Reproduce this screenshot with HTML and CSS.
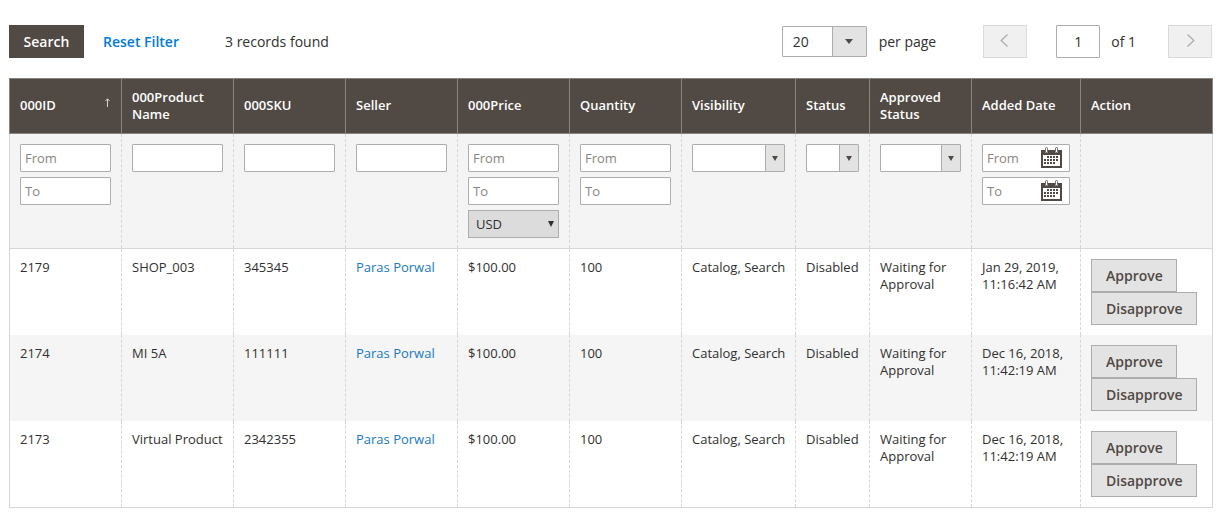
FILE: index.html
```html
<!DOCTYPE html>
<html lang="en">
<head>
    <meta charset="UTF-8">
    <title>Products</title>
    <link rel="stylesheet" href="styles.css">
</head>
<body>
<div class="toolbar">
    <button class="btn-search">Search</button>
    <a href="#" class="reset">Reset Filter</a>
    <span class="found">3 records found</span>
    <div class="pagesize">
        <span class="pagesize-val">20</span>
        <span class="pagesize-arrow"><i class="tri"></i></span>
    </div>
    <span class="perpage">per page</span>
    <button class="pager prev"><svg width="8" height="13" viewBox="0 0 8 13"><path d="M7.5 0.5 L1.2 6.5 L7.5 12.5" fill="none" stroke="#adadad" stroke-width="1.3"/></svg></button>
    <input class="pagenum" type="text" value="1">
    <span class="of">of 1</span>
    <button class="pager next"><svg width="8" height="13" viewBox="0 0 8 13"><path d="M0.5 0.5 L6.8 6.5 L0.5 12.5" fill="none" stroke="#adadad" stroke-width="1.3"/></svg></button>
</div>
<table class="grid">
    <colgroup>
        <col class="w112"><col class="w112"><col class="w112"><col class="w112"><col class="w112"><col class="w112">
        <col class="w114"><col class="w74"><col class="w102"><col class="w109"><col class="w132">
    </colgroup>
    <thead>
    <tr>
        <th>000ID<svg class="sort" width="5" height="9" viewBox="0 0 5 9"><path d="M2.5 9V1M0.5 3L2.5 0.8L4.5 3" fill="none" stroke="#d8d3cf" stroke-width="1"/></svg></th>
        <th class="two">000Product Name</th>
        <th>000SKU</th>
        <th>Seller</th>
        <th>000Price</th>
        <th>Quantity</th>
        <th>Visibility</th>
        <th>Status</th>
        <th class="two">Approved Status</th>
        <th>Added Date</th>
        <th>Action</th>
    </tr>
    <tr class="filters">
        <td>
            <input type="text" placeholder="From">
            <input type="text" placeholder="To">
        </td>
        <td><input type="text"></td>
        <td><input type="text"></td>
        <td><input type="text"></td>
        <td>
            <input type="text" placeholder="From">
            <input type="text" placeholder="To">
            <div class="currency">USD</div>
        </td>
        <td>
            <input type="text" placeholder="From">
            <input type="text" placeholder="To">
        </td>
        <td><div class="sel"><span class="sel-val"></span><span class="sel-arrow"><i class="tri"></i></span></div></td>
        <td><div class="sel"><span class="sel-val"></span><span class="sel-arrow"><i class="tri"></i></span></div></td>
        <td><div class="sel"><span class="sel-val"></span><span class="sel-arrow"><i class="tri"></i></span></div></td>
        <td>
            <div class="datebox">
                <input type="text" placeholder="From">
                <svg class="cal" width="21" height="21" viewBox="0 0 21 21"><use href="#cal"/></svg>
            </div>
            <div class="datebox">
                <input type="text" placeholder="To">
                <svg class="cal" width="21" height="21" viewBox="0 0 21 21"><use href="#cal"/></svg>
            </div>
        </td>
        <td></td>
    </tr>
    </thead>
    <tbody>
    <tr>
        <td>2179</td>
        <td>SHOP_003</td>
        <td>345345</td>
        <td><a href="#">Paras Porwal</a></td>
        <td>$100.00</td>
        <td>100</td>
        <td class="nowrap">Catalog, Search</td>
        <td>Disabled</td>
        <td>Waiting for Approval</td>
        <td>Jan 29, 2019, 11:16:42 AM</td>
        <td><button class="act">Approve</button><button class="act">Disapprove</button></td>
    </tr>
    <tr class="alt">
        <td>2174</td>
        <td>MI 5A</td>
        <td>111111</td>
        <td><a href="#">Paras Porwal</a></td>
        <td>$100.00</td>
        <td>100</td>
        <td class="nowrap">Catalog, Search</td>
        <td>Disabled</td>
        <td>Waiting for Approval</td>
        <td>Dec 16, 2018, 11:42:19 AM</td>
        <td><button class="act">Approve</button><button class="act">Disapprove</button></td>
    </tr>
    <tr>
        <td>2173</td>
        <td>Virtual Product</td>
        <td>2342355</td>
        <td><a href="#">Paras Porwal</a></td>
        <td>$100.00</td>
        <td>100</td>
        <td class="nowrap">Catalog, Search</td>
        <td>Disabled</td>
        <td>Waiting for Approval</td>
        <td>Dec 16, 2018, 11:42:19 AM</td>
        <td><button class="act">Approve</button><button class="act">Disapprove</button></td>
    </tr>
    </tbody>
</table>
<svg class="defs" width="0" height="0">
    <symbol id="cal" viewBox="0 0 21 21">
        <path fill="#514943" d="M0 3h4v2.5h3V3h7v2.5h3V3h4v18H0z"/>
        <rect x="2" y="8" width="17" height="11" fill="#fff"/>
        <rect x="4.5" y="0.5" width="2" height="5" rx="1" fill="#fff" stroke="#514943" stroke-width="0.8"/>
        <rect x="14.5" y="0.5" width="2" height="5" rx="1" fill="#fff" stroke="#514943" stroke-width="0.8"/>
        <path stroke="#514943" stroke-width="2" stroke-dasharray="2 1" fill="none" d="M6 10h12M3 13h15M3 16h12"/>
    </symbol>
</svg>
</body>
</html>
```

FILE: styles.css
```css
body {
    margin: 0;
    padding: 25px 12px 0 9px;
    font-family: "Open Sans", sans-serif;
    font-size: 13px;
    line-height: 17px;
    color: #303030;
    background: #fff;
}
button, input {
    font-family: inherit;
}
.toolbar {
    display: flex;
    align-items: center;
    height: 33px;
    margin-bottom: 20px;
    width: 1203px;
    font-size: 14px;
}
.btn-search {
    width: 75px;
    height: 33px;
    border: 0;
    background: #514943;
    color: #fff;
    font-size: 14px;
    font-weight: 600;
    padding: 0;
}
.reset {
    margin-left: 19px;
    color: #007bdb;
    font-weight: 600;
    text-decoration: none;
}
.found {
    margin-left: 46px;
}
.pagesize {
    display: flex;
    width: 85px;
    height: 31px;
    margin-left: auto;
    box-sizing: border-box;
    border: 1px solid #adadad;
    border-radius: 1px;
}
.pagesize-val {
    flex: 1;
    padding-left: 10px;
    line-height: 29px;
}
.pagesize-arrow {
    width: 33px;
    background: #e3e3e3;
    border-left: 1px solid #adadad;
    display: flex;
    align-items: center;
    justify-content: center;
}
.tri {
    display: block;
    width: 0;
    height: 0;
    border-left: 4px solid transparent;
    border-right: 4px solid transparent;
    border-top: 5px solid #514943;
}
.perpage {
    margin-left: 12px;
    margin-right: 47px;
}
.pager {
    width: 44px;
    height: 33px;
    box-sizing: border-box;
    background: #f0f0f0;
    border: 1px solid #dadada;
    padding: 0;
    display: flex;
    align-items: center;
    justify-content: center;
}
.prev svg {
    margin: 0 2px 2px 0;
}
.next svg {
    margin: 0 0 2px 2px;
}
.pagenum {
    width: 44px;
    height: 33px;
    box-sizing: border-box;
    margin-left: 29px;
    border: 1px solid #adadad;
    border-radius: 1px;
    text-align: center;
    font-size: 14px;
    color: #303030;
    padding: 0;
}
.of {
    margin-left: 11px;
    margin-right: 32px;
}
.grid {
    width: 1203px;
    table-layout: fixed;
    border-collapse: collapse;
}
.w112 { width: 112px; }
.w114 { width: 114px; }
.w74 { width: 74px; }
.w102 { width: 102px; }
.w109 { width: 109px; }
.w132 { width: 132px; }
.grid th {
    background: #514943;
    color: #fff;
    font-weight: 600;
    text-align: left;
    padding: 9px 10px 11px;
    height: 34px;
    border: 1px solid #8a837f;
    position: relative;
}
.grid th.two {
    padding: 10px;
}
.sort {
    position: absolute;
    right: 11px;
    top: 19px;
}
.grid td {
    padding: 10px;
    vertical-align: top;
    border-left: 1px dashed #d6d6d6;
    border-right: 1px dashed #d6d6d6;
}
.grid td.nowrap {
    white-space: nowrap;
}
.grid tbody tr:last-child td {
    border-bottom: 1px solid #d6d6d6;
}
.grid td:first-child {
    border-left: 1px solid #d6d6d6;
}
.grid td:last-child {
    border-right: 1px solid #d6d6d6;
}
.grid a {
    color: #1979c3;
    text-decoration: none;
}
.filters td {
    background: #f4f4f4;
    border-bottom: 1px solid #d6d6d6;
}
.alt td {
    background: #f5f5f5;
}
.filters input {
    display: block;
    width: 100%;
    height: 28px;
    box-sizing: border-box;
    margin: 0 0 5px;
    padding: 0 4px;
    border: 1px solid #adadad;
    border-radius: 1px;
    background: #fff;
    font-size: 13px;
}
.filters input::placeholder {
    color: #8a8580;
}
.filters td > :last-child {
    margin-bottom: 0;
}
.currency {
    height: 28px;
    box-sizing: border-box;
    border: 1px solid #adadad;
    background: #dcdcdc;
    padding-left: 7px;
    line-height: 26px;
    position: relative;
}
.currency::after {
    content: "";
    position: absolute;
    right: 4px;
    top: 10px;
    border-left: 3px solid transparent;
    border-right: 3px solid transparent;
    border-top: 6px solid #303030;
}
.sel {
    display: flex;
    height: 28px;
    box-sizing: border-box;
    border: 1px solid #adadad;
    border-radius: 1px;
    background: #fff;
}
.sel-val {
    flex: 1;
}
.sel-arrow {
    width: 18px;
    background: #e3e3e3;
    border-left: 1px solid #adadad;
    display: flex;
    align-items: center;
    justify-content: center;
}
.sel-arrow .tri {
    border-left-width: 3.5px;
    border-right-width: 3.5px;
}
.datebox {
    position: relative;
    margin-bottom: 5px;
}
.datebox input {
    margin: 0;
}
.cal {
    position: absolute;
    right: 8px;
    top: 3px;
}
.act {
    display: block;
    height: 33px;
    box-sizing: border-box;
    padding: 0 13px 0 14px;
    border: 1px solid #adadad;
    background: #e3e3e3;
    color: #514943;
    font-size: 14px;
    font-weight: 600;
}
.defs {
    position: absolute;
}
```
